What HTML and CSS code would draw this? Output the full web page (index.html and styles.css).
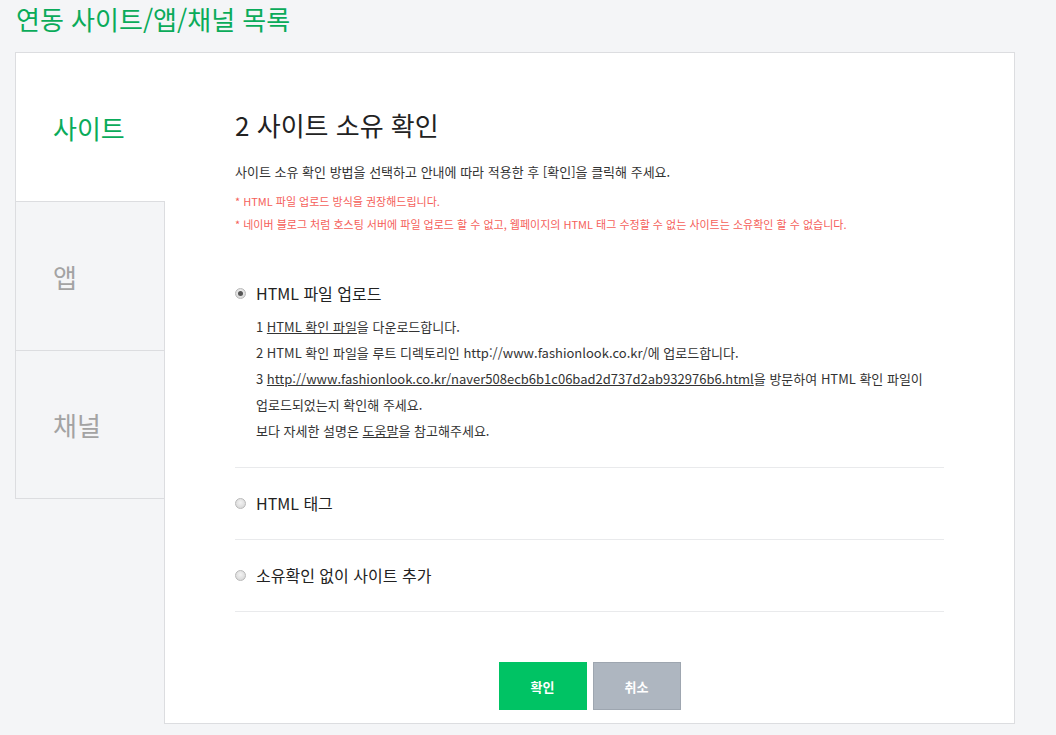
FILE: index.html
```html
<!DOCTYPE html>
<html lang="ko">
<head>
<meta charset="utf-8">
<title>연동 사이트/앱/채널 목록</title>
<link rel="stylesheet" href="styles.css">
</head>
<body>
<h1 class="page-title">연동 사이트/앱/채널 목록</h1>
<div class="board">
  <ul class="side">
    <li class="tab active">사이트</li>
    <li class="tab">앱</li>
    <li class="tab">채널</li>
  </ul>
  <div class="panel">
    <h2 class="heading">2 사이트 소유 확인</h2>
    <p class="desc">사이트 소유 확인 방법을 선택하고 안내에 따라 적용한 후 [확인]을 클릭해 주세요.</p>
    <ul class="notes">
      <li>* HTML 파일 업로드 방식을 권장해드립니다.</li>
      <li>* 네이버 블로그 처럼 호스팅 서버에 파일 업로드 할 수 없고, 웹페이지의 HTML 태그 수정할 수 없는 사이트는 소유확인 할 수 없습니다.</li>
    </ul>
    <div class="options">
      <div class="option first">
        <label class="opt-label"><span class="radio checked"></span>HTML 파일 업로드</label>
        <ol class="steps">
          <li>1 <a class="link" href="#">HTML 확인 파일</a>을 다운로드합니다.</li>
          <li>2 HTML 확인 파일을 루트 디렉토리인 http://www.fashionlook.co.kr/에 업로드합니다.</li>
          <li>3 <a class="link" href="#">http://www.fashionlook.co.kr/naver508ecb6b1c06bad2d737d2ab932976b6.html</a>을 방문하여 HTML 확인 파일이 업로드되었는지 확인해 주세요.</li>
          <li>보다 자세한 설명은 <a class="link" href="#">도움말</a>을 참고해주세요.</li>
        </ol>
      </div>
      <div class="option">
        <label class="opt-label"><span class="radio"></span>HTML 태그</label>
      </div>
      <div class="option">
        <label class="opt-label"><span class="radio"></span>소유확인 없이 사이트 추가</label>
      </div>
    </div>
    <div class="buttons">
      <button class="btn btn-ok">확인</button>
      <button class="btn btn-cancel">취소</button>
    </div>
  </div>
</div>
</body>
</html>
```
FILE: styles.css
```css
* { box-sizing: border-box; }
html, body {
  margin: 0;
  padding: 0;
  background: #f4f5f7;
  font-family: "Noto Sans CJK KR", "Noto Sans", sans-serif;
  color: #333;
}
ul, ol { list-style: none; margin: 0; padding: 0; }
p, h1, h2 { margin: 0; }

.page-title {
  font-size: 26px;
  font-weight: normal;
  line-height: 30px;
  color: #0aab5a;
  padding: 4px 0 0 16px;
  margin-bottom: 18px;
}

.board {
  display: flex;
  align-items: flex-start;
  margin-left: 15px;
  width: 1000px;
}

.side {
  width: 150px;
  flex: none;
  margin-right: -1px;
  position: relative;
  z-index: 1;
}
.tab {
  height: 149px;
  display: flex;
  align-items: center;
  padding-left: 37px;
  font-size: 26px;
  color: #a3a3a3;
  background: #f4f5f7;
  border: 1px solid #dcdde0;
  border-bottom: none;
}
.tab:last-child { border-bottom: 1px solid #dcdde0; }
.tab.active {
  background: #fff;
  color: #0aab5a;
  border-right: none;
}

.panel {
  flex: 1;
  background: #fff;
  border: 1px solid #dcdde0;
  padding: 57px 70px 13px 70px;
}

.heading {
  font-size: 26px;
  font-weight: normal;
  line-height: 30px;
  color: #222;
}
.desc {
  margin-top: 22px;
  font-size: 13px;
  line-height: 20px;
  color: #333;
}
.notes {
  margin-top: 8px;
  font-size: 11px;
  line-height: 23px;
  color: #f5605a;
}

.options { margin-top: 45px; }
.option {
  padding: 23px 0 24px;
  border-bottom: 1px solid #e9eaec;
}
.option.first { padding-top: 0; padding-bottom: 23px; }
.opt-label {
  display: flex;
  align-items: center;
  font-size: 16px;
  line-height: 24px;
  color: #222;
}
.radio {
  width: 11px;
  height: 11px;
  border-radius: 50%;
  border: 1px solid #b9b9b9;
  background: radial-gradient(circle at 50% 40%, #f3f3f3, #d2d2d2);
  margin-right: 10px;
  flex: none;
  position: relative;
}
.radio.checked::after {
  content: "";
  position: absolute;
  left: 2px;
  top: 2px;
  width: 5px;
  height: 5px;
  border-radius: 50%;
  background: #555;
}

.steps {
  margin-top: 9px;
  padding-left: 21px;
  font-size: 13px;
  line-height: 26px;
  color: #333;
  word-break: keep-all;
}
.link { color: #333; text-decoration: underline; }

.buttons {
  display: flex;
  justify-content: center;
  gap: 6px;
  margin-top: 50px;
}
.btn {
  width: 88px;
  height: 48px;
  font-family: inherit;
  font-size: 13px;
  font-weight: bold;
  color: #fff;
  border: 1px solid transparent;
  padding: 0;
  cursor: pointer;
}
.btn-ok { background: #00c364; border-color: #00c364; }
.btn-cancel { background: #aeb6c0; border-color: #9ea6b0; }
```
